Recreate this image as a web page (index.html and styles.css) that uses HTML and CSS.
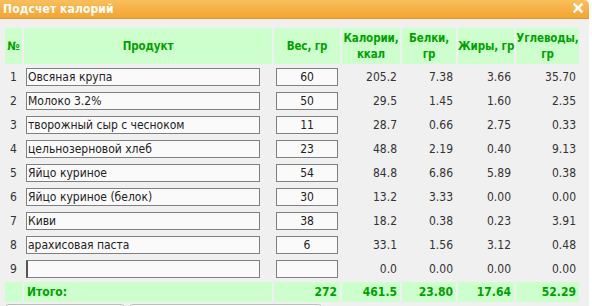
FILE: index.html
```html
<!DOCTYPE html>
<html lang="ru">
<head>
<meta charset="utf-8">
<title>Подсчет калорий</title>
<link rel="stylesheet" href="styles.css">
</head>
<body>
<div class="dialog">
  <div class="titlebar">
    <span class="title">Подсчет калорий</span>
    <span class="close" aria-label="Закрыть">
      <svg width="10" height="10" viewBox="0 0 10 10"><path d="M1.5 1.5 L8.5 8.5 M8.5 1.5 L1.5 8.5" stroke="#fff" stroke-width="2.6" stroke-linecap="square"/></svg>
    </span>
  </div>
  <div class="content">
    <table class="calc">
      <colgroup>
        <col class="c-num"><col class="c-prod"><col class="c-w"><col class="c-kcal"><col class="c-p"><col class="c-f"><col class="c-c">
      </colgroup>
      <thead>
        <tr>
          <th>№</th>
          <th>Продукт</th>
          <th>Вес, гр</th>
          <th>Калории,<br>ккал</th>
          <th>Белки,<br>гр</th>
          <th class="nowrap">Жиры, гр</th>
          <th>Углеводы,<br>гр</th>
        </tr>
      </thead>
      <tbody>
        <tr><td class="n">1</td><td><input class="prod" value="Овсяная крупа"></td><td><input class="w" value="60"></td><td class="v">205.2</td><td class="v">7.38</td><td class="v">3.66</td><td class="v">35.70</td></tr>
        <tr><td class="n">2</td><td><input class="prod" value="Молоко 3.2%"></td><td><input class="w" value="50"></td><td class="v">29.5</td><td class="v">1.45</td><td class="v">1.60</td><td class="v">2.35</td></tr>
        <tr><td class="n">3</td><td><input class="prod" value="творожный сыр с чесноком"></td><td><input class="w" value="11"></td><td class="v">28.7</td><td class="v">0.66</td><td class="v">2.75</td><td class="v">0.33</td></tr>
        <tr><td class="n">4</td><td><input class="prod" value="цельнозерновой хлеб"></td><td><input class="w" value="23"></td><td class="v">48.8</td><td class="v">2.19</td><td class="v">0.40</td><td class="v">9.13</td></tr>
        <tr><td class="n">5</td><td><input class="prod" value="Яйцо куриное"></td><td><input class="w" value="54"></td><td class="v">84.8</td><td class="v">6.86</td><td class="v">5.89</td><td class="v">0.38</td></tr>
        <tr><td class="n">6</td><td><input class="prod" value="Яйцо куриное (белок)"></td><td><input class="w" value="30"></td><td class="v">13.2</td><td class="v">3.33</td><td class="v">0.00</td><td class="v">0.00</td></tr>
        <tr><td class="n">7</td><td><input class="prod" value="Киви"></td><td><input class="w" value="38"></td><td class="v">18.2</td><td class="v">0.38</td><td class="v">0.23</td><td class="v">3.91</td></tr>
        <tr><td class="n">8</td><td><input class="prod" value="арахисовая паста"></td><td><input class="w" value="6"></td><td class="v">33.1</td><td class="v">1.56</td><td class="v">3.12</td><td class="v">0.48</td></tr>
        <tr><td class="n">9</td><td><input class="prod active" value=""></td><td><input class="w" value=""></td><td class="v">0.0</td><td class="v">0.00</td><td class="v">0.00</td><td class="v">0.00</td></tr>
      </tbody>
      <tfoot>
        <tr><td></td><td class="label">Итого:</td><td class="v">272</td><td class="v">461.5</td><td class="v">23.80</td><td class="v">17.64</td><td class="v">52.29</td></tr>
      </tfoot>
    </table>
    <div class="buttons">
      <button class="btn btn-a" type="button"></button>
      <button class="btn btn-b" type="button"></button>
    </div>
  </div>
</div>
</body>
</html>
```
FILE: styles.css
```css
html, body {
  margin: 0;
  padding: 0;
  background: #ffffff;
}
body {
  font-family: "DejaVu Sans Condensed", "DejaVu Sans", sans-serif;
  font-size: 12px;
  color: #333333;
}
.dialog {
  width: 589px;
  height: 306px;
  background: #f0f0f0;
  border-top-right-radius: 5px;
  overflow: hidden;
}
.titlebar {
  height: 18px;
  background: linear-gradient(#f9bf5c, #f3a531);
  border-bottom: 1px solid #e2962a;
  display: flex;
  align-items: center;
  justify-content: space-between;
  padding: 0 6px 0 3px;
}
.title {
  color: #ffffff;
  font-weight: bold;
  font-size: 12px;
  letter-spacing: 0.1px;
}
.close {
  display: flex;
  margin-top: -2px;
}
.content {
  padding: 7px 0 0 3px;
}
.calc {
  border-collapse: separate;
  border-spacing: 2px;
  table-layout: fixed;
  width: 578px;
}
.c-num { width: 17px; }
.c-prod { width: 248px; }
.c-w { width: 66px; }
.c-kcal { width: 58px; }
.c-p { width: 54px; }
.c-f { width: 56px; }
.c-c { width: 63px; }
.calc th, .calc td {
  padding: 0;
  box-sizing: border-box;
}
.calc th {
  height: 36px;
  background: #ccffcc;
  color: #00a200;
  font-weight: bold;
  font-size: 11.5px;
  letter-spacing: -0.1px;
  line-height: 16px;
  text-align: center;
  vertical-align: middle;
}
.calc th.nowrap {
  white-space: nowrap;
}
.calc tbody td {
  height: 22px;
  vertical-align: middle;
}
.calc td.n {
  text-align: center;
}
.calc td.v {
  text-align: right;
  padding-right: 3px;
}
.calc input {
  font-family: inherit;
  font-size: 12px;
  color: #222222;
  height: 18px;
  box-sizing: border-box;
  border: 1px solid #7f7f7f;
  background: #fafafa;
  padding: 0 1px;
  margin: 0 0 0 2px;
  display: block;
  outline: none;
}
.calc input.prod { width: 234px; }
.calc input.w { width: 62px; text-align: center; }
.calc input.active { border-left: 2px solid #555555; }
.calc tfoot td {
  height: 20px;
  background: #ccffcc;
  color: #00a200;
  font-weight: bold;
  vertical-align: middle;
}
.calc tfoot td.label {
  padding-left: 3px;
}
.buttons {
  display: flex;
  gap: 4px;
  padding: 0 0 0 2px;
}
.btn {
  height: 24px;
  background: #ffffff;
  border: 1px solid #bdbdbd;
  border-radius: 4px;
  padding: 0;
}
.btn-a { width: 120px; }
.btn-b { width: 193px; }
```
